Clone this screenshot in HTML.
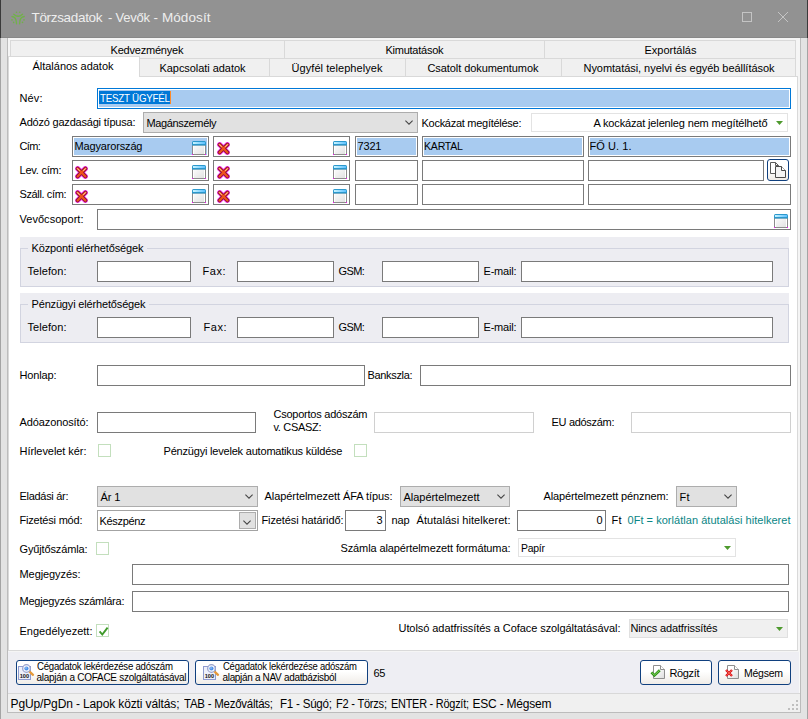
<!DOCTYPE html>
<html lang="hu"><head><meta charset="utf-8"><title>Törzsadatok - Vevők - Módosít</title>
<style>
html,body{margin:0;padding:0}
body{width:808px;height:719px;position:relative;overflow:hidden;background:#d6d6d6;font-family:'Liberation Sans',sans-serif;font-size:11px}
div,span,svg{position:absolute}
span{white-space:pre;line-height:1.149}
</style></head><body>
<div style="left:0px;top:0px;width:808px;height:719px;background:#e3e3e3"></div>
<div style="left:0px;top:0px;width:808px;height:37px;background:#929292"></div>
<div style="left:0px;top:37px;width:808px;height:1px;background:#888888"></div>
<div style="left:0px;top:0px;width:1px;height:38px;background:#3a3a3a"></div>
<div style="left:0px;top:38px;width:1px;height:681px;background:#a4a4a4"></div>
<div style="left:807px;top:0px;width:1px;height:38px;background:#3a3a3a"></div>
<div style="left:807px;top:38px;width:1px;height:681px;background:#a4a4a4"></div>
<div style="left:7px;top:38px;width:794px;height:675px;background:#bcbcbc"></div>
<div style="left:8px;top:38px;width:792px;height:674px;background:#eeeef3"></div>
<div style="left:8px;top:38px;width:792px;height:614px;background:#f5f5f5"></div>
<div style="left:799px;top:652px;width:1px;height:41px;background:#f8f8f8"></div>
<svg style="left:10px;top:10px" width="16" height="16" viewBox="0 0 16 16"><g fill="none" stroke="#70b248" stroke-width="1.35" stroke-linecap="round"><path d="M3.8 4.2 Q8.2 8.4 12.5 4.2"/><path d="M2 6.5 Q6.5 7 6.5 13.7"/><path d="M14.2 6.5 Q9.6 7 9.6 13.7"/></g><g fill="#70b248"><circle cx="6.5" cy="2.3" r="0.8"/><circle cx="9.7" cy="2.3" r="0.8"/><circle cx="2" cy="9.8" r="0.85"/><circle cx="3.6" cy="12.4" r="0.8"/><circle cx="14" cy="9.8" r="0.85"/><circle cx="12.5" cy="12.4" r="0.8"/></g></svg>
<svg style="left:741px;top:11px" width="12" height="12"><rect x="1.5" y="1.5" width="9" height="9" fill="none" stroke="#c4c4c4" stroke-width="1"/></svg>
<svg style="left:777px;top:11px" width="12" height="12"><path d="M1 1 L11 11 M11 1 L1 11" fill="none" stroke="#c4c4c4" stroke-width="1"/></svg>
<div style="left:10px;top:40px;width:275px;height:19px;background:#f0f0f0;border:1px solid #d9d9d9;box-sizing:border-box"></div>
<div style="left:284px;top:40px;width:261px;height:19px;background:#f0f0f0;border:1px solid #d9d9d9;box-sizing:border-box"></div>
<div style="left:544px;top:40px;width:252px;height:19px;background:#f0f0f0;border:1px solid #d9d9d9;box-sizing:border-box"></div>
<div style="left:8px;top:76px;width:790px;height:575px;background:#fff;border:1px solid #d9d9d9;box-sizing:border-box"></div>
<div style="left:139px;top:58px;width:131px;height:19px;background:#f0f0f0;border:1px solid #d9d9d9;box-sizing:border-box"></div>
<div style="left:269px;top:58px;width:137px;height:19px;background:#f0f0f0;border:1px solid #d9d9d9;box-sizing:border-box"></div>
<div style="left:405px;top:58px;width:157px;height:19px;background:#f0f0f0;border:1px solid #d9d9d9;box-sizing:border-box"></div>
<div style="left:561px;top:58px;width:235px;height:19px;background:#f0f0f0;border:1px solid #d9d9d9;box-sizing:border-box"></div>
<div style="left:8px;top:56px;width:132px;height:21px;background:#fff;border:1px solid #d9d9d9;border-bottom:none;box-sizing:border-box"></div>
<div style="left:97px;top:88px;width:694px;height:21px;background:#fff;border:1px solid #0078d7;box-sizing:border-box"><div style="left:1px;top:1px;right:1px;bottom:1px;background:#a8cbf0"></div><div style="left:1px;top:2px;width:71px;height:13px;background:#0078d7"></div><div style="left:72px;top:2px;width:1px;height:13px;background:#ff8a28"></div></div>
<div style="left:143px;top:112px;width:275px;height:21px;background:#e1e1e1;border:1px solid #adadad;box-sizing:border-box"></div>
<svg style="left:405px;top:120px" width="8" height="6"><path d="M0.4 0.6 L4 4.2 L7.6 0.6" fill="none" stroke="#454545" stroke-width="1.05"/></svg>
<div style="left:531px;top:113px;width:257px;height:19px;background:#fff;border:1px solid #e3e3e3;box-sizing:border-box"></div>
<svg style="left:776px;top:121px" width="7" height="4"><path d="M0 0 H7 L3.5 4 Z" fill="#4e9a2e"/></svg>
<div style="left:72px;top:136px;width:137px;height:21px;background:#fff;border:1px solid #7a7a7a;box-sizing:border-box"><div style="left:1px;top:1px;right:1px;bottom:1px;background:#a8cbf0"></div></div>
<svg style="left:192px;top:141px" width="14" height="14" viewBox="0 0 14 14"><defs><linearGradient id="wg" x1="0" y1="0" x2="1" y2="1"><stop offset="0" stop-color="#fafafa"/><stop offset="1" stop-color="#e2e2e2"/></linearGradient><linearGradient id="wb" x1="0" y1="0" x2="1" y2="0"><stop offset="0" stop-color="#c8f4ff"/><stop offset="1" stop-color="#5cc0ff"/></linearGradient></defs><rect x="0.5" y="4" width="13" height="9.5" fill="#fff" stroke="#8c8c8c"/><rect x="2" y="5" width="10" height="8" fill="url(#wg)"/><path d="M0 4.5 V1.5 Q0 0 1.5 0 H12.5 Q14 0 14 1.5 V4.5 Z" fill="#2c98cc"/><rect x="1" y="1" width="12" height="2" fill="url(#wb)"/><rect x="0" y="13" width="1" height="1" fill="#f0f"/><rect x="13" y="13" width="1" height="1" fill="#f0f"/></svg>
<div style="left:213px;top:136px;width:137px;height:21px;background:#fff;border:1px solid #7a7a7a;box-sizing:border-box"></div>
<svg style="left:217px;top:142px" width="13" height="13" viewBox="0 0 13 13"><path d="M2.7 2.7 L10.3 10.3 M10.3 2.7 L2.7 10.3" stroke="#f0f" stroke-opacity="0.75" stroke-width="5.2" stroke-linecap="round" fill="none"/><path d="M2.6 2.6 L10.4 10.4 M10.4 2.6 L2.6 10.4" stroke="#8a1638" stroke-width="3.9" stroke-linecap="round" fill="none"/><path d="M2.6 2.6 L10.4 10.4 M10.4 2.6 L2.6 10.4" stroke="#f0521c" stroke-width="2.1" stroke-linecap="round" fill="none"/><path d="M2.4 2.6 L4.4 4.6 M10.6 2.6 L8.6 4.6" stroke="#ffd2b4" stroke-width="1" stroke-linecap="round" fill="none"/></svg>
<svg style="left:333px;top:141px" width="14" height="14" viewBox="0 0 14 14"><defs><linearGradient id="wg" x1="0" y1="0" x2="1" y2="1"><stop offset="0" stop-color="#fafafa"/><stop offset="1" stop-color="#e2e2e2"/></linearGradient><linearGradient id="wb" x1="0" y1="0" x2="1" y2="0"><stop offset="0" stop-color="#c8f4ff"/><stop offset="1" stop-color="#5cc0ff"/></linearGradient></defs><rect x="0.5" y="4" width="13" height="9.5" fill="#fff" stroke="#8c8c8c"/><rect x="2" y="5" width="10" height="8" fill="url(#wg)"/><path d="M0 4.5 V1.5 Q0 0 1.5 0 H12.5 Q14 0 14 1.5 V4.5 Z" fill="#2c98cc"/><rect x="1" y="1" width="12" height="2" fill="url(#wb)"/><rect x="0" y="13" width="1" height="1" fill="#f0f"/><rect x="13" y="13" width="1" height="1" fill="#f0f"/></svg>
<div style="left:355px;top:136px;width:63px;height:21px;background:#fff;border:1px solid #7a7a7a;box-sizing:border-box"><div style="left:1px;top:1px;right:1px;bottom:1px;background:#a8cbf0"></div></div>
<div style="left:422px;top:136px;width:162px;height:21px;background:#fff;border:1px solid #7a7a7a;box-sizing:border-box"><div style="left:1px;top:1px;right:1px;bottom:1px;background:#a8cbf0"></div></div>
<div style="left:588px;top:136px;width:203px;height:21px;background:#fff;border:1px solid #7a7a7a;box-sizing:border-box"><div style="left:1px;top:1px;right:1px;bottom:1px;background:#a8cbf0"></div></div>
<div style="left:72px;top:160px;width:137px;height:21px;background:#fff;border:1px solid #7a7a7a;box-sizing:border-box"></div>
<svg style="left:192px;top:165px" width="14" height="14" viewBox="0 0 14 14"><defs><linearGradient id="wg" x1="0" y1="0" x2="1" y2="1"><stop offset="0" stop-color="#fafafa"/><stop offset="1" stop-color="#e2e2e2"/></linearGradient><linearGradient id="wb" x1="0" y1="0" x2="1" y2="0"><stop offset="0" stop-color="#c8f4ff"/><stop offset="1" stop-color="#5cc0ff"/></linearGradient></defs><rect x="0.5" y="4" width="13" height="9.5" fill="#fff" stroke="#8c8c8c"/><rect x="2" y="5" width="10" height="8" fill="url(#wg)"/><path d="M0 4.5 V1.5 Q0 0 1.5 0 H12.5 Q14 0 14 1.5 V4.5 Z" fill="#2c98cc"/><rect x="1" y="1" width="12" height="2" fill="url(#wb)"/><rect x="0" y="13" width="1" height="1" fill="#f0f"/><rect x="13" y="13" width="1" height="1" fill="#f0f"/></svg>
<div style="left:213px;top:160px;width:137px;height:21px;background:#fff;border:1px solid #7a7a7a;box-sizing:border-box"></div>
<svg style="left:217px;top:166px" width="13" height="13" viewBox="0 0 13 13"><path d="M2.7 2.7 L10.3 10.3 M10.3 2.7 L2.7 10.3" stroke="#f0f" stroke-opacity="0.75" stroke-width="5.2" stroke-linecap="round" fill="none"/><path d="M2.6 2.6 L10.4 10.4 M10.4 2.6 L2.6 10.4" stroke="#8a1638" stroke-width="3.9" stroke-linecap="round" fill="none"/><path d="M2.6 2.6 L10.4 10.4 M10.4 2.6 L2.6 10.4" stroke="#f0521c" stroke-width="2.1" stroke-linecap="round" fill="none"/><path d="M2.4 2.6 L4.4 4.6 M10.6 2.6 L8.6 4.6" stroke="#ffd2b4" stroke-width="1" stroke-linecap="round" fill="none"/></svg>
<svg style="left:333px;top:165px" width="14" height="14" viewBox="0 0 14 14"><defs><linearGradient id="wg" x1="0" y1="0" x2="1" y2="1"><stop offset="0" stop-color="#fafafa"/><stop offset="1" stop-color="#e2e2e2"/></linearGradient><linearGradient id="wb" x1="0" y1="0" x2="1" y2="0"><stop offset="0" stop-color="#c8f4ff"/><stop offset="1" stop-color="#5cc0ff"/></linearGradient></defs><rect x="0.5" y="4" width="13" height="9.5" fill="#fff" stroke="#8c8c8c"/><rect x="2" y="5" width="10" height="8" fill="url(#wg)"/><path d="M0 4.5 V1.5 Q0 0 1.5 0 H12.5 Q14 0 14 1.5 V4.5 Z" fill="#2c98cc"/><rect x="1" y="1" width="12" height="2" fill="url(#wb)"/><rect x="0" y="13" width="1" height="1" fill="#f0f"/><rect x="13" y="13" width="1" height="1" fill="#f0f"/></svg>
<div style="left:355px;top:160px;width:63px;height:21px;background:#fff;border:1px solid #7a7a7a;box-sizing:border-box"></div>
<div style="left:422px;top:160px;width:162px;height:21px;background:#fff;border:1px solid #7a7a7a;box-sizing:border-box"></div>
<div style="left:588px;top:160px;width:176px;height:21px;background:#fff;border:1px solid #7a7a7a;box-sizing:border-box"></div>
<svg style="left:75px;top:166px" width="13" height="13" viewBox="0 0 13 13"><path d="M2.7 2.7 L10.3 10.3 M10.3 2.7 L2.7 10.3" stroke="#f0f" stroke-opacity="0.75" stroke-width="5.2" stroke-linecap="round" fill="none"/><path d="M2.6 2.6 L10.4 10.4 M10.4 2.6 L2.6 10.4" stroke="#8a1638" stroke-width="3.9" stroke-linecap="round" fill="none"/><path d="M2.6 2.6 L10.4 10.4 M10.4 2.6 L2.6 10.4" stroke="#f0521c" stroke-width="2.1" stroke-linecap="round" fill="none"/><path d="M2.4 2.6 L4.4 4.6 M10.6 2.6 L8.6 4.6" stroke="#ffd2b4" stroke-width="1" stroke-linecap="round" fill="none"/></svg>
<div style="left:72px;top:184px;width:137px;height:21px;background:#fff;border:1px solid #7a7a7a;box-sizing:border-box"></div>
<svg style="left:192px;top:189px" width="14" height="14" viewBox="0 0 14 14"><defs><linearGradient id="wg" x1="0" y1="0" x2="1" y2="1"><stop offset="0" stop-color="#fafafa"/><stop offset="1" stop-color="#e2e2e2"/></linearGradient><linearGradient id="wb" x1="0" y1="0" x2="1" y2="0"><stop offset="0" stop-color="#c8f4ff"/><stop offset="1" stop-color="#5cc0ff"/></linearGradient></defs><rect x="0.5" y="4" width="13" height="9.5" fill="#fff" stroke="#8c8c8c"/><rect x="2" y="5" width="10" height="8" fill="url(#wg)"/><path d="M0 4.5 V1.5 Q0 0 1.5 0 H12.5 Q14 0 14 1.5 V4.5 Z" fill="#2c98cc"/><rect x="1" y="1" width="12" height="2" fill="url(#wb)"/><rect x="0" y="13" width="1" height="1" fill="#f0f"/><rect x="13" y="13" width="1" height="1" fill="#f0f"/></svg>
<div style="left:213px;top:184px;width:137px;height:21px;background:#fff;border:1px solid #7a7a7a;box-sizing:border-box"></div>
<svg style="left:217px;top:190px" width="13" height="13" viewBox="0 0 13 13"><path d="M2.7 2.7 L10.3 10.3 M10.3 2.7 L2.7 10.3" stroke="#f0f" stroke-opacity="0.75" stroke-width="5.2" stroke-linecap="round" fill="none"/><path d="M2.6 2.6 L10.4 10.4 M10.4 2.6 L2.6 10.4" stroke="#8a1638" stroke-width="3.9" stroke-linecap="round" fill="none"/><path d="M2.6 2.6 L10.4 10.4 M10.4 2.6 L2.6 10.4" stroke="#f0521c" stroke-width="2.1" stroke-linecap="round" fill="none"/><path d="M2.4 2.6 L4.4 4.6 M10.6 2.6 L8.6 4.6" stroke="#ffd2b4" stroke-width="1" stroke-linecap="round" fill="none"/></svg>
<svg style="left:333px;top:189px" width="14" height="14" viewBox="0 0 14 14"><defs><linearGradient id="wg" x1="0" y1="0" x2="1" y2="1"><stop offset="0" stop-color="#fafafa"/><stop offset="1" stop-color="#e2e2e2"/></linearGradient><linearGradient id="wb" x1="0" y1="0" x2="1" y2="0"><stop offset="0" stop-color="#c8f4ff"/><stop offset="1" stop-color="#5cc0ff"/></linearGradient></defs><rect x="0.5" y="4" width="13" height="9.5" fill="#fff" stroke="#8c8c8c"/><rect x="2" y="5" width="10" height="8" fill="url(#wg)"/><path d="M0 4.5 V1.5 Q0 0 1.5 0 H12.5 Q14 0 14 1.5 V4.5 Z" fill="#2c98cc"/><rect x="1" y="1" width="12" height="2" fill="url(#wb)"/><rect x="0" y="13" width="1" height="1" fill="#f0f"/><rect x="13" y="13" width="1" height="1" fill="#f0f"/></svg>
<div style="left:355px;top:184px;width:63px;height:21px;background:#fff;border:1px solid #7a7a7a;box-sizing:border-box"></div>
<div style="left:422px;top:184px;width:162px;height:21px;background:#fff;border:1px solid #7a7a7a;box-sizing:border-box"></div>
<div style="left:588px;top:184px;width:203px;height:21px;background:#fff;border:1px solid #7a7a7a;box-sizing:border-box"></div>
<svg style="left:75px;top:190px" width="13" height="13" viewBox="0 0 13 13"><path d="M2.7 2.7 L10.3 10.3 M10.3 2.7 L2.7 10.3" stroke="#f0f" stroke-opacity="0.75" stroke-width="5.2" stroke-linecap="round" fill="none"/><path d="M2.6 2.6 L10.4 10.4 M10.4 2.6 L2.6 10.4" stroke="#8a1638" stroke-width="3.9" stroke-linecap="round" fill="none"/><path d="M2.6 2.6 L10.4 10.4 M10.4 2.6 L2.6 10.4" stroke="#f0521c" stroke-width="2.1" stroke-linecap="round" fill="none"/><path d="M2.4 2.6 L4.4 4.6 M10.6 2.6 L8.6 4.6" stroke="#ffd2b4" stroke-width="1" stroke-linecap="round" fill="none"/></svg>
<div style="left:767px;top:159px;width:22px;height:22px;border:1px solid #10407f;border-radius:3px;box-sizing:border-box;background:linear-gradient(#fff,#fff 50%,#efebe6)"></div>
<svg style="left:769px;top:161px" width="18" height="18" viewBox="0 0 18 18"><path d="M1.5 1.5 H6.5 L9.5 4.5 V12.5 H1.5 Z" fill="#fff" stroke="#5a5a5a"/><path d="M6.5 1.5 V4.5 H9.5" fill="none" stroke="#5a5a5a"/><path d="M6.5 5.5 H12.5 L16.5 9.5 V16.5 H6.5 Z" fill="#f4f4f4" stroke="#4a4a4a"/><path d="M12.5 5.5 V9.5 H16.5" fill="#fff" stroke="#4a4a4a"/></svg>
<div style="left:97px;top:209px;width:694px;height:21px;background:#fff;border:1px solid #7a7a7a;box-sizing:border-box"></div>
<svg style="left:774px;top:214px" width="14" height="14" viewBox="0 0 14 14"><defs><linearGradient id="wg" x1="0" y1="0" x2="1" y2="1"><stop offset="0" stop-color="#fafafa"/><stop offset="1" stop-color="#e2e2e2"/></linearGradient><linearGradient id="wb" x1="0" y1="0" x2="1" y2="0"><stop offset="0" stop-color="#c8f4ff"/><stop offset="1" stop-color="#5cc0ff"/></linearGradient></defs><rect x="0.5" y="4" width="13" height="9.5" fill="#fff" stroke="#8c8c8c"/><rect x="2" y="5" width="10" height="8" fill="url(#wg)"/><path d="M0 4.5 V1.5 Q0 0 1.5 0 H12.5 Q14 0 14 1.5 V4.5 Z" fill="#2c98cc"/><rect x="1" y="1" width="12" height="2" fill="url(#wb)"/><rect x="0" y="13" width="1" height="1" fill="#f0f"/><rect x="13" y="13" width="1" height="1" fill="#f0f"/></svg>
<div style="left:20px;top:237px;width:769px;height:50px;background:#ededf2"></div>
<div style="left:20px;top:248px;width:769px;height:39px;border:1px solid #d2d4e0;box-sizing:border-box"></div>
<div style="left:28px;top:241px;width:119px;height:14px;background:#ededf2"></div>
<div style="left:97px;top:261px;width:94px;height:21px;background:#fff;border:1px solid #7a7a7a;box-sizing:border-box"></div>
<div style="left:237px;top:261px;width:97px;height:21px;background:#fff;border:1px solid #7a7a7a;box-sizing:border-box"></div>
<div style="left:382px;top:261px;width:97px;height:21px;background:#fff;border:1px solid #7a7a7a;box-sizing:border-box"></div>
<div style="left:521px;top:261px;width:252px;height:21px;background:#fff;border:1px solid #7a7a7a;box-sizing:border-box"></div>
<div style="left:20px;top:293px;width:769px;height:50px;background:#ededf2"></div>
<div style="left:20px;top:304px;width:769px;height:39px;border:1px solid #d2d4e0;box-sizing:border-box"></div>
<div style="left:28px;top:297px;width:121px;height:14px;background:#ededf2"></div>
<div style="left:97px;top:317px;width:94px;height:21px;background:#fff;border:1px solid #7a7a7a;box-sizing:border-box"></div>
<div style="left:237px;top:317px;width:97px;height:21px;background:#fff;border:1px solid #7a7a7a;box-sizing:border-box"></div>
<div style="left:382px;top:317px;width:97px;height:21px;background:#fff;border:1px solid #7a7a7a;box-sizing:border-box"></div>
<div style="left:521px;top:317px;width:252px;height:21px;background:#fff;border:1px solid #7a7a7a;box-sizing:border-box"></div>
<div style="left:97px;top:365px;width:268px;height:21px;background:#fff;border:1px solid #7a7a7a;box-sizing:border-box"></div>
<div style="left:420px;top:365px;width:371px;height:21px;background:#fff;border:1px solid #7a7a7a;box-sizing:border-box"></div>
<div style="left:97px;top:412px;width:159px;height:21px;background:#fff;border:1px solid #7a7a7a;box-sizing:border-box"></div>
<div style="left:374px;top:412px;width:160px;height:21px;background:#fff;border:1px solid #d0d0d0;box-sizing:border-box"></div>
<div style="left:631px;top:412px;width:160px;height:21px;background:#fff;border:1px solid #d0d0d0;box-sizing:border-box"></div>
<div style="left:98px;top:444px;width:13px;height:13px;background:#fff;border:1px solid #c3dfbd;box-sizing:border-box"></div>
<div style="left:354px;top:444px;width:13px;height:13px;background:#fff;border:1px solid #c3dfbd;box-sizing:border-box"></div>
<div style="left:97px;top:486px;width:161px;height:21px;background:#e1e1e1;border:1px solid #adadad;box-sizing:border-box"></div>
<svg style="left:245px;top:494px" width="8" height="6"><path d="M0.4 0.6 L4 4.2 L7.6 0.6" fill="none" stroke="#454545" stroke-width="1.05"/></svg>
<div style="left:400px;top:486px;width:110px;height:21px;background:#e1e1e1;border:1px solid #adadad;box-sizing:border-box"></div>
<svg style="left:497px;top:494px" width="8" height="6"><path d="M0.4 0.6 L4 4.2 L7.6 0.6" fill="none" stroke="#454545" stroke-width="1.05"/></svg>
<div style="left:676px;top:486px;width:61px;height:21px;background:#e1e1e1;border:1px solid #adadad;box-sizing:border-box"></div>
<svg style="left:724px;top:494px" width="8" height="6"><path d="M0.4 0.6 L4 4.2 L7.6 0.6" fill="none" stroke="#454545" stroke-width="1.05"/></svg>
<div style="left:97px;top:510px;width:161px;height:21px;background:#fff;border:1px solid #a3a3a3;box-sizing:border-box"></div>
<div style="left:239px;top:512px;width:17px;height:17px;background:#e1e1e1;border:1px solid #adadad;box-sizing:border-box"></div>
<svg style="left:243px;top:519.5px" width="8" height="6"><path d="M0.4 0.6 L4 4.2 L7.6 0.6" fill="none" stroke="#454545" stroke-width="1.05"/></svg>
<div style="left:345px;top:510px;width:41px;height:21px;background:#fff;border:1px solid #7a7a7a;box-sizing:border-box"></div>
<div style="left:517px;top:510px;width:89px;height:21px;background:#fff;border:1px solid #7a7a7a;box-sizing:border-box"></div>
<div style="left:96px;top:542px;width:13px;height:13px;background:#fff;border:1px solid #c3dfbd;box-sizing:border-box"></div>
<div style="left:518px;top:538px;width:218px;height:19px;background:#fff;border:1px solid #e3e3e3;box-sizing:border-box"></div>
<svg style="left:724px;top:546px" width="7" height="4"><path d="M0 0 H7 L3.5 4 Z" fill="#4e9a2e"/></svg>
<div style="left:132px;top:564px;width:657px;height:21px;background:#fff;border:1px solid #7a7a7a;box-sizing:border-box"></div>
<div style="left:132px;top:591px;width:657px;height:21px;background:#fff;border:1px solid #7a7a7a;box-sizing:border-box"></div>
<div style="left:96px;top:624px;width:13px;height:13px;background:#fff;border:1px solid #c3dfbd;box-sizing:border-box"><svg style="left:1px;top:1px" width="11" height="11"><path d="M1.6 5.4 L4.3 8.6 L9.6 1.6" fill="none" stroke="#3f9a2a" stroke-width="1.9"/></svg></div>
<div style="left:629px;top:619px;width:159px;height:19px;background:#f0f0f0;border:1px solid #e0e0e0;box-sizing:border-box"></div>
<svg style="left:776px;top:627px" width="7" height="4"><path d="M0 0 H7 L3.5 4 Z" fill="#4e9a2e"/></svg>
<div style="left:16px;top:660px;width:173px;height:25px;border:1px solid #10407f;border-radius:3px;box-sizing:border-box;background:linear-gradient(#fff,#fff 45%,#f0ece8)"></div>
<svg style="left:18px;top:662px" width="18" height="18" viewBox="0 0 18 18"><rect x="0.5" y="4.5" width="12" height="13" fill="#eef0fa" stroke="#8f9bcf"/><text x="1.7" y="15.9" font-family="Liberation Sans,sans-serif" font-size="5.8" font-weight="bold" textLength="9.4" lengthAdjust="spacingAndGlyphs" fill="#111">100</text><path d="M11.6 9.7 L15 12.8" stroke="#e69a3a" stroke-width="2.3" stroke-linecap="round"/><circle cx="8.45" cy="6.5" r="3.8" fill="#f4f6fc" stroke="#98a2cc" stroke-width="1.2"/><circle cx="8.45" cy="6.5" r="2.1" fill="#4f93ea"/><circle cx="8" cy="6" r="0.8" fill="#a8ccf8"/></svg>
<div style="left:195px;top:660px;width:173px;height:25px;border:1px solid #10407f;border-radius:3px;box-sizing:border-box;background:linear-gradient(#fff,#fff 45%,#f0ece8)"></div>
<svg style="left:203px;top:662px" width="18" height="18" viewBox="0 0 18 18"><rect x="0.5" y="4.5" width="12" height="13" fill="#eef0fa" stroke="#8f9bcf"/><text x="1.7" y="15.9" font-family="Liberation Sans,sans-serif" font-size="5.8" font-weight="bold" textLength="9.4" lengthAdjust="spacingAndGlyphs" fill="#111">100</text><path d="M11.6 9.7 L15 12.8" stroke="#e69a3a" stroke-width="2.3" stroke-linecap="round"/><circle cx="8.45" cy="6.5" r="3.8" fill="#f4f6fc" stroke="#98a2cc" stroke-width="1.2"/><circle cx="8.45" cy="6.5" r="2.1" fill="#4f93ea"/><circle cx="8" cy="6" r="0.8" fill="#a8ccf8"/></svg>
<div style="left:640px;top:660px;width:72px;height:25px;border:1px solid #10407f;border-radius:3px;box-sizing:border-box;background:linear-gradient(#fff,#fff 45%,#f0ece8)"></div>
<svg style="left:650px;top:664px" width="16" height="16" viewBox="0 0 16 16"><defs><linearGradient id="pg" x1="0" y1="0" x2="1" y2="1"><stop offset="0.3" stop-color="#fff"/><stop offset="1" stop-color="#dcdcdc"/></linearGradient></defs><path d="M3.5 1.5 H10.5 L14.5 5.5 V14.5 H3.5 Z" fill="url(#pg)" stroke="#8f8f8f"/><path d="M10.5 1.5 V5.5 H14.5" fill="#fff" stroke="#8f8f8f"/><path d="M1.4 8.3 L4.4 11.4 L9.8 6.2" fill="none" stroke="#2f8f1e" stroke-width="2.6"/><path d="M1.6 8.3 L4.4 11.2 L9.6 6.3" fill="none" stroke="#8fe05a" stroke-width="0.9"/></svg>
<div style="left:718px;top:660px;width:73px;height:25px;border:1px solid #10407f;border-radius:3px;box-sizing:border-box;background:linear-gradient(#fff,#fff 45%,#f0ece8)"></div>
<svg style="left:724px;top:664px" width="16" height="16" viewBox="0 0 16 16"><path d="M3.5 1.5 H10.5 L14.5 5.5 V14.5 H3.5 Z" fill="url(#pg)" stroke="#8f8f8f"/><path d="M10.5 1.5 V5.5 H14.5" fill="#fff" stroke="#8f8f8f"/><path d="M2 6 L8 12 M8 6 L2 12" fill="none" stroke="#d8141e" stroke-width="2.4"/><path d="M2.3 6.3 L7.7 11.7 M7.7 6.3 L2.3 11.7" fill="none" stroke="#ff6a50" stroke-width="0.8"/></svg>
<div style="left:8px;top:693px;width:792px;height:19px;background:#f0f0f0;border-top:1px solid #d8d8d8;box-sizing:border-box"></div>
<svg style="left:788px;top:700px" width="10" height="10"><rect x="8" y="0" width="2" height="2" fill="#bfbfbf"/><rect x="4" y="4" width="2" height="2" fill="#bfbfbf"/><rect x="8" y="4" width="2" height="2" fill="#bfbfbf"/><rect x="0" y="8" width="2" height="2" fill="#bfbfbf"/><rect x="4" y="8" width="2" height="2" fill="#bfbfbf"/><rect x="8" y="8" width="2" height="2" fill="#bfbfbf"/></svg>
<span style="left:31.5px;top:10px;font-size:13.5px;color:#eeeeee;letter-spacing:-0.330px;">Törzsadatok</span>
<span style="left:107.5px;top:10px;font-size:13.5px;color:#eeeeee;letter-spacing:-0.250px;transform:scaleX(0.9648);transform-origin:0 0;">- Vevők</span>
<span style="left:153.5px;top:10px;font-size:13.5px;color:#eeeeee;letter-spacing:0.090px;">- Módosít</span>
<span style="left:110.5px;top:44px;font-size:11px;color:#000;letter-spacing:-0.202px;">Kedvezmények</span>
<span style="left:385.5px;top:44px;font-size:11px;color:#000;letter-spacing:-0.253px;">Kimutatások</span>
<span style="left:644.5px;top:44px;font-size:11px;color:#000;">Exportálás</span>
<span style="left:159.5px;top:62px;font-size:11px;color:#000;letter-spacing:-0.053px;">Kapcsolati adatok</span>
<span style="left:291.5px;top:62px;font-size:11px;color:#000;letter-spacing:0.065px;">Ügyfél telephelyek</span>
<span style="left:427.5px;top:62px;font-size:11px;color:#000;letter-spacing:-0.079px;">Csatolt dokumentumok</span>
<span style="left:583.5px;top:62px;font-size:11px;color:#000;letter-spacing:-0.042px;">Nyomtatási, nyelvi és egyéb beállítások</span>
<span style="left:32.5px;top:60px;font-size:11px;color:#000;letter-spacing:-0.023px;">Általános adatok</span>
<span style="left:19.5px;top:92px;font-size:11px;color:#000;letter-spacing:0.125px;">Név:</span>
<span style="left:99.5px;top:92px;font-size:11px;color:#fff;letter-spacing:-0.250px;transform:scaleX(0.8866);transform-origin:0 0;">TESZT ÜGYFÉL</span>
<span style="left:19.5px;top:116px;font-size:11px;color:#000;letter-spacing:-0.204px;">Adózó gazdasági típusa:</span>
<span style="left:146.5px;top:117px;font-size:11px;color:#000;letter-spacing:-0.362px;">Magánszemély</span>
<span style="left:421.5px;top:117px;font-size:11px;color:#000;letter-spacing:-0.272px;">Kockázat megítélése:</span>
<span style="left:593.5px;top:117px;font-size:11px;color:#000;letter-spacing:-0.152px;">A kockázat jelenleg nem megítélhető</span>
<span style="left:19.5px;top:140px;font-size:11px;color:#000;letter-spacing:-0.600px;">Cím:</span>
<span style="left:19.5px;top:164px;font-size:11px;color:#000;letter-spacing:-0.227px;">Lev. cím:</span>
<span style="left:19.5px;top:188px;font-size:11px;color:#000;letter-spacing:-0.373px;">Száll. cím:</span>
<span style="left:74.5px;top:140px;font-size:11px;color:#000;letter-spacing:-0.155px;">Magyarország</span>
<span style="left:357.5px;top:140px;font-size:11px;color:#000;letter-spacing:-0.161px;">7321</span>
<span style="left:423.5px;top:140px;font-size:11px;color:#000;letter-spacing:-0.250px;transform:scaleX(0.9622);transform-origin:0 0;">KARTAL</span>
<span style="left:589.5px;top:140px;font-size:11px;color:#000;letter-spacing:0.062px;">FŐ U. 1.</span>
<span style="left:19.5px;top:213px;font-size:11px;color:#000;letter-spacing:0.037px;">Vevőcsoport:</span>
<span style="left:31.5px;top:242px;font-size:11px;color:#000;letter-spacing:-0.141px;">Központi elérhetőségek</span>
<span style="left:27.5px;top:265px;font-size:11px;color:#000;letter-spacing:0.067px;">Telefon:</span>
<span style="left:202.5px;top:265px;font-size:11px;color:#000;letter-spacing:0.531px;">Fax:</span>
<span style="left:338.5px;top:265px;font-size:11px;color:#000;letter-spacing:-0.600px;">GSM:</span>
<span style="left:483.5px;top:265px;font-size:11px;color:#000;letter-spacing:-0.206px;">E-mail:</span>
<span style="left:31.5px;top:298px;font-size:11px;color:#000;letter-spacing:-0.163px;">Pénzügyi elérhetőségek</span>
<span style="left:27.5px;top:321px;font-size:11px;color:#000;letter-spacing:0.067px;">Telefon:</span>
<span style="left:203.5px;top:321px;font-size:11px;color:#000;letter-spacing:0.531px;">Fax:</span>
<span style="left:338.5px;top:321px;font-size:11px;color:#000;letter-spacing:-0.600px;">GSM:</span>
<span style="left:483.5px;top:321px;font-size:11px;color:#000;letter-spacing:-0.206px;">E-mail:</span>
<span style="left:19.5px;top:369px;font-size:11px;color:#000;letter-spacing:-0.154px;">Honlap:</span>
<span style="left:367.5px;top:369px;font-size:11px;color:#000;letter-spacing:-0.338px;">Bankszla:</span>
<span style="left:19.5px;top:416px;font-size:11px;color:#000;letter-spacing:-0.112px;">Adóazonosító:</span>
<span style="left:273.5px;top:408px;font-size:11px;color:#000;letter-spacing:-0.239px;">Csoportos adószám</span>
<span style="left:273.5px;top:421px;font-size:11px;color:#000;letter-spacing:-0.316px;">v. CSASZ:</span>
<span style="left:551.5px;top:416px;font-size:11px;color:#000;letter-spacing:-0.303px;">EU adószám:</span>
<span style="left:19.5px;top:445px;font-size:11px;color:#000;letter-spacing:-0.061px;">Hírlevelet kér:</span>
<span style="left:163.5px;top:445px;font-size:11px;color:#000;letter-spacing:-0.197px;">Pénzügyi levelek automatikus küldése</span>
<span style="left:19.5px;top:490px;font-size:11px;color:#000;letter-spacing:-0.298px;">Eladási ár:</span>
<span style="left:100.5px;top:491px;font-size:11px;color:#000;letter-spacing:-0.062px;">Ár 1</span>
<span style="left:264.5px;top:490px;font-size:11px;color:#000;letter-spacing:-0.065px;">Alapértelmezett ÁFA típus:</span>
<span style="left:403.5px;top:491px;font-size:11px;color:#000;letter-spacing:-0.031px;">Alapértelmezett</span>
<span style="left:543.5px;top:490px;font-size:11px;color:#000;letter-spacing:-0.122px;">Alapértelmezett pénznem:</span>
<span style="left:679.5px;top:491px;font-size:11px;color:#000;letter-spacing:0.219px;">Ft</span>
<span style="left:19.5px;top:514px;font-size:11px;color:#000;letter-spacing:-0.202px;">Fizetési mód:</span>
<span style="left:99.5px;top:515px;font-size:11px;color:#000;letter-spacing:-0.330px;">Készpénz</span>
<span style="left:261.5px;top:514px;font-size:11px;color:#000;letter-spacing:-0.104px;">Fizetési határidő:</span>
<span style="left:376.4px;top:514px;font-size:11px;color:#000;">3</span>
<span style="left:391.5px;top:514px;font-size:11px;color:#000;letter-spacing:-0.180px;">nap</span>
<span style="left:416.5px;top:514px;font-size:11px;color:#000;letter-spacing:0.053px;">Átutalási hitelkeret:</span>
<span style="left:596.4px;top:514px;font-size:11px;color:#000;">0</span>
<span style="left:611.5px;top:514px;font-size:11px;color:#000;letter-spacing:0.219px;">Ft</span>
<span style="left:627.5px;top:514px;font-size:11px;color:#0a8585;letter-spacing:0.036px;">0Ft = korlátlan átutalási hitelkeret</span>
<span style="left:19.5px;top:543px;font-size:11px;color:#000;letter-spacing:-0.142px;">Gyűjtőszámla:</span>
<span style="left:340.5px;top:542px;font-size:11px;color:#000;letter-spacing:-0.114px;">Számla alapértelmezett formátuma:</span>
<span style="left:520.5px;top:542px;font-size:11px;color:#000;letter-spacing:-0.250px;transform:scaleX(0.9487);transform-origin:0 0;">Papír</span>
<span style="left:19.5px;top:568px;font-size:11px;color:#000;letter-spacing:-0.077px;">Megjegyzés:</span>
<span style="left:19.5px;top:595px;font-size:11px;color:#000;letter-spacing:-0.234px;">Megjegyzés számlára:</span>
<span style="left:19.5px;top:625px;font-size:11px;color:#000;letter-spacing:0.017px;">Engedélyezett:</span>
<span style="left:398.5px;top:622px;font-size:11px;color:#000;letter-spacing:-0.066px;">Utolsó adatfrissítés a Coface szolgáltatásával:</span>
<span style="left:630.5px;top:622px;font-size:11px;color:#000;letter-spacing:-0.160px;">Nincs adatfrissítés</span>
<span style="left:36.5px;top:661px;font-size:10px;color:#000;letter-spacing:-0.250px;transform:scaleX(0.9616);transform-origin:0 0;">Cégadatok lekérdezése adószám</span>
<span style="left:36.5px;top:672px;font-size:10px;color:#000;letter-spacing:-0.263px;">alapján a COFACE szolgáltatásával</span>
<span style="left:222.5px;top:661px;font-size:10px;color:#000;letter-spacing:-0.250px;transform:scaleX(0.9474);transform-origin:0 0;">Cégadatok lekérdezése adószám</span>
<span style="left:222.5px;top:672px;font-size:10px;color:#000;letter-spacing:-0.325px;">alapján a NAV adatbázisból</span>
<span style="left:373.5px;top:667px;font-size:11px;color:#000;letter-spacing:-0.250px;">65</span>
<span style="left:669.5px;top:667px;font-size:11px;color:#000;letter-spacing:-0.359px;">Rögzít</span>
<span style="left:743.5px;top:667px;font-size:11px;color:#000;letter-spacing:-0.250px;transform:scaleX(0.9527);transform-origin:0 0;">Mégsem</span>
<span style="left:10.5px;top:698px;font-size:12px;color:#000;letter-spacing:-0.126px;">PgUp/PgDn - Lapok közti váltás;</span>
<span style="left:183.5px;top:698px;font-size:12px;color:#000;letter-spacing:-0.250px;transform:scaleX(0.9555);transform-origin:0 0;">TAB - Mezőváltás;</span>
<span style="left:279.5px;top:698px;font-size:12px;color:#000;letter-spacing:-0.250px;transform:scaleX(0.9669);transform-origin:0 0;">F1 - Súgó;</span>
<span style="left:335.5px;top:698px;font-size:12px;color:#000;letter-spacing:-0.250px;transform:scaleX(0.9223);transform-origin:0 0;">F2 - Törzs;</span>
<span style="left:390.5px;top:698px;font-size:12px;color:#000;letter-spacing:-0.250px;transform:scaleX(0.9085);transform-origin:0 0;">ENTER - Rögzít;</span>
<span style="left:472.5px;top:698px;font-size:12px;color:#000;letter-spacing:-0.214px;">ESC - Mégsem</span>
</body></html>
